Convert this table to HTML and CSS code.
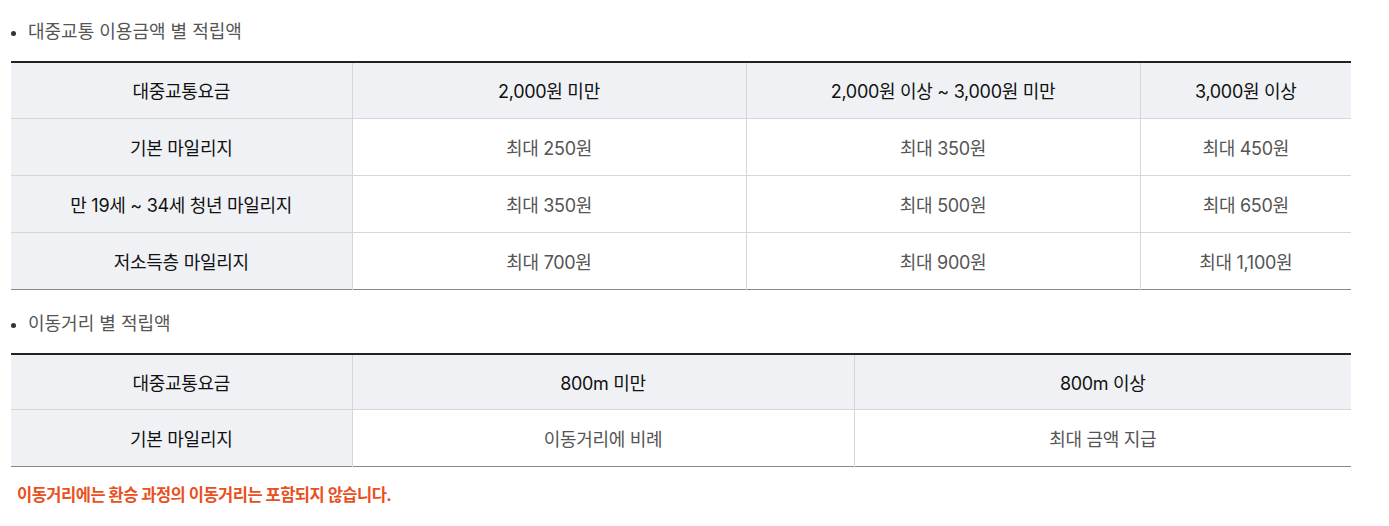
FILE: index.html
```html
<!DOCTYPE html>
<html lang="ko">
<head>
<meta charset="utf-8">
<link rel="stylesheet" href="styles.css">
</head>
<body>
<div class="wrap">
  <ul class="bullets"><li>대중교통 이용금액 별 적립액</li></ul>
  <table class="tbl tbl-a">
    <colgroup><col class="c1"><col class="c2"><col class="c3"><col class="c4"></colgroup>
    <thead>
      <tr><th>대중교통요금</th><th>2,000원 미만</th><th>2,000원 이상 ~ 3,000원 미만</th><th>3,000원 이상</th></tr>
    </thead>
    <tbody>
      <tr><th>기본 마일리지</th><td>최대 250원</td><td>최대 350원</td><td>최대 450원</td></tr>
      <tr><th>만 19세 ~ 34세 청년 마일리지</th><td>최대 350원</td><td>최대 500원</td><td>최대 650원</td></tr>
      <tr><th>저소득층 마일리지</th><td>최대 700원</td><td>최대 900원</td><td>최대 1,100원</td></tr>
    </tbody>
  </table>
  <ul class="bullets second"><li>이동거리 별 적립액</li></ul>
  <table class="tbl tbl-b">
    <colgroup><col class="c1"><col class="d2"><col class="d3"></colgroup>
    <thead>
      <tr><th>대중교통요금</th><th>800m 미만</th><th>800m 이상</th></tr>
    </thead>
    <tbody>
      <tr><th>기본 마일리지</th><td>이동거리에 비례</td><td>최대 금액 지급</td></tr>
    </tbody>
  </table>
  <p class="note">이동거리에는 환승 과정의 이동거리는 포함되지 않습니다.</p>
</div>
</body>
</html>
```

FILE: styles.css
```css
* { box-sizing: border-box; }
html, body { margin: 0; padding: 0; background: #fff; }
body {
  font-family: Inter, "Noto Sans CJK KR", sans-serif;
  color: #222;
}
.wrap {
  width: 1340px;
  margin-left: 11px;
  padding-top: 19px;
}
.bullets {
  list-style: none;
  margin: 0;
  padding: 0;
}
.bullets li {
  position: relative;
  padding-left: 17px;
  font-size: 18px;
  line-height: 26px;
  color: #555;
  letter-spacing: 0;
}
.bullets li::before {
  content: "";
  position: absolute;
  left: 0;
  top: 12px;
  width: 5px;
  height: 5px;
  border-radius: 50%;
  background: #333;
}
.tbl {
  width: 1340px;
  border-collapse: collapse;
  table-layout: fixed;
  margin-top: 16px;
  border-top: 2px solid #222;
  border-bottom: 1px solid #888;
}
.tbl th, .tbl td {
  height: 57px;
  padding: 0;
  text-align: center;
  vertical-align: middle;
  font-size: 18px;
  letter-spacing: -0.3px;
  border-top: 1px solid #d6d6d6;
  border-left: 1px solid #d6d6d6;
}
.tbl tr > :first-child { border-left: none; }
.tbl thead th {
  border-top: none;
  height: 56px;
  background: #f0f1f5;
  font-weight: 400;
  color: #111;
}
.tbl tbody th {
  background: #f0f1f5;
  font-weight: 400;
  color: #111;
}
.tbl td {
  color: #555;
  font-weight: 400;
  background: #fff;
}
.c1 { width: 341px; }
.c2 { width: 394px; }
.c3 { width: 394px; }
.c4 { width: 211px; }
.d2 { width: 502px; }
.d3 { width: 497px; }
.second { margin-top: 21px; }
.note {
  margin: 15px 0 0 6px;
  font-size: 16.5px;
  font-weight: 700;
  color: #e8501e;
  letter-spacing: -0.5px;
}
```
